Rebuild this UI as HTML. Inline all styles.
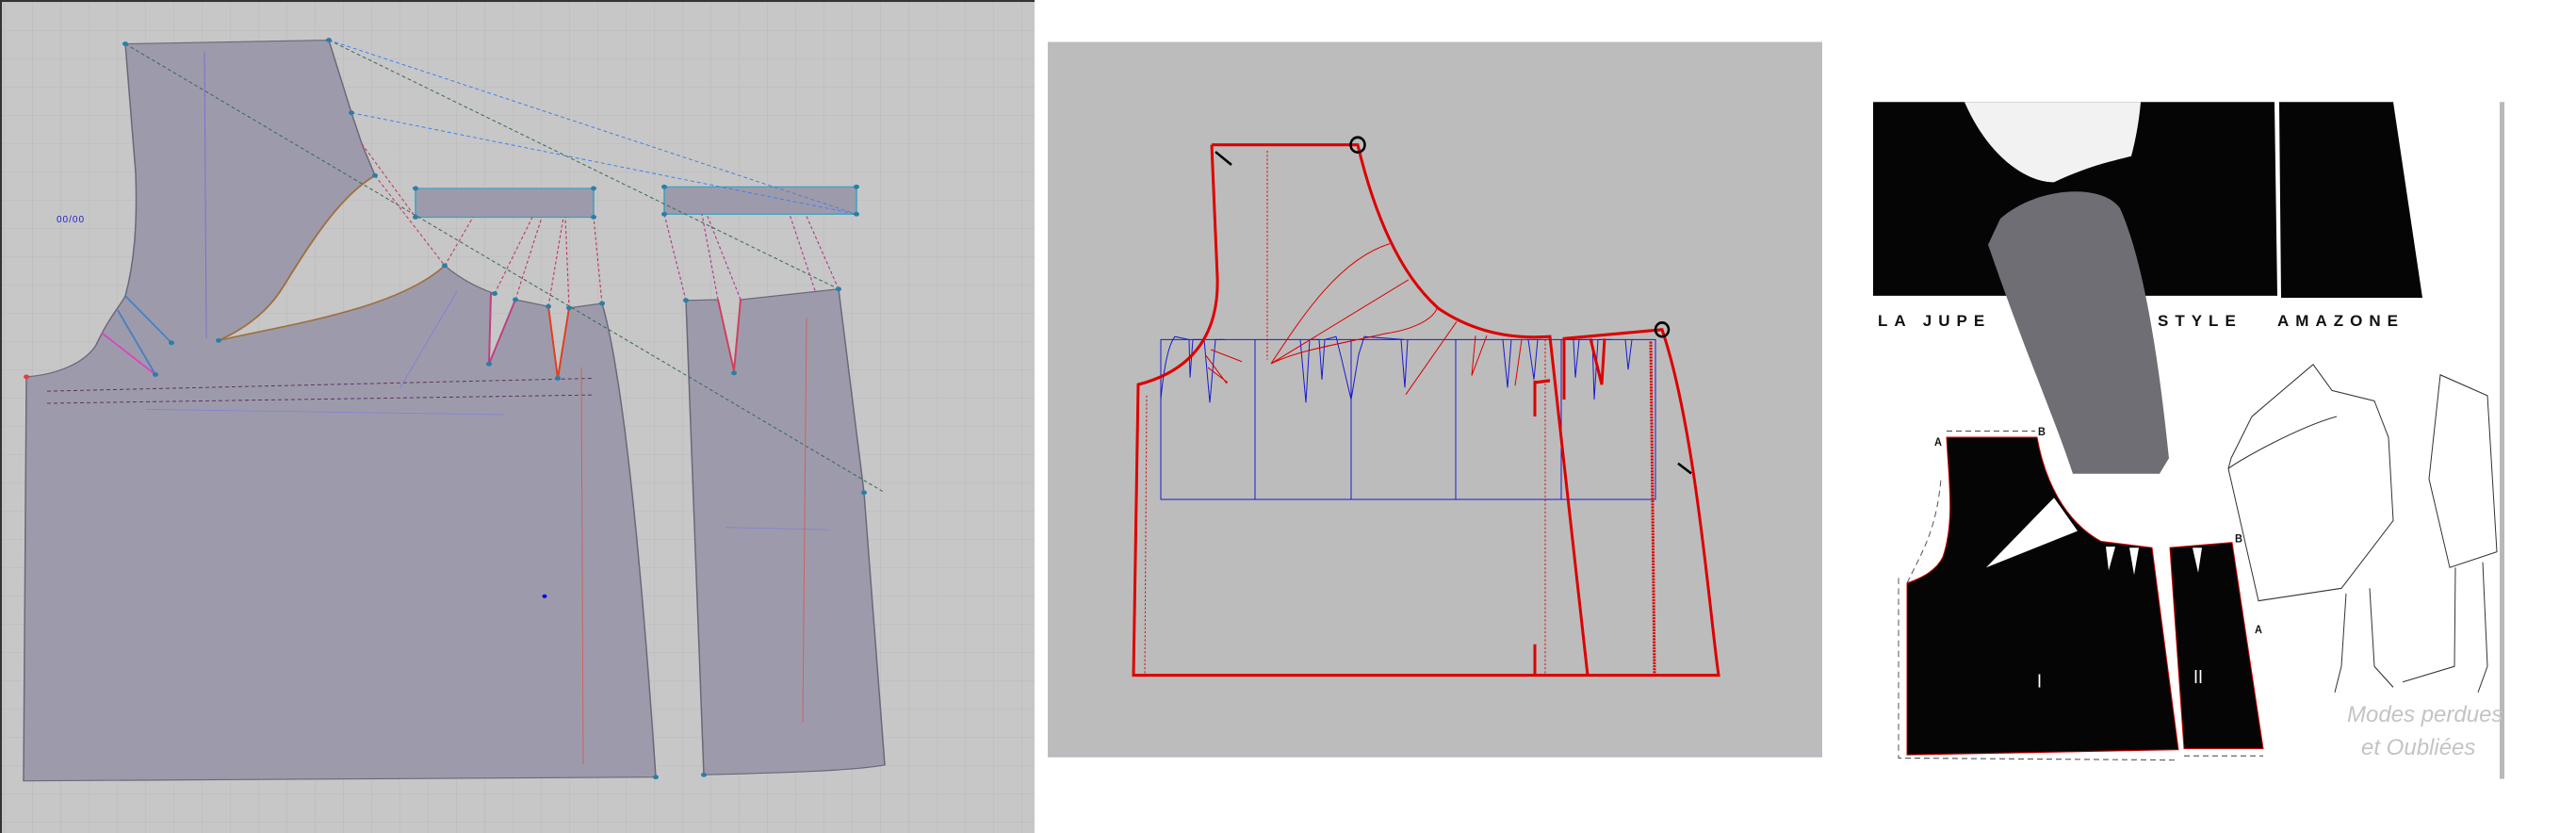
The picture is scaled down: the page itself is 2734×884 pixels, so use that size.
<!DOCTYPE html>
<html><head><meta charset="utf-8"><style>
html,body{margin:0;padding:0;background:#fff;width:2734px;height:884px;overflow:hidden}
svg{display:block}
text{font-family:"Liberation Sans",sans-serif}
</style></head><body>
<svg width="2734" height="884" viewBox="0 0 2734 884" xmlns="http://www.w3.org/2000/svg">
<defs>
<pattern id="g" width="30" height="30" patternUnits="userSpaceOnUse" x="5" y="3">
<path d="M30 0V30M0 30H30" stroke="#b9b9bc" stroke-width="1" fill="none"/>
</pattern>
</defs>
<!-- Panel 1 -->
<rect x="0" y="0" width="1098" height="884" fill="#c7c7c7"/>
<rect x="0" y="0" width="1098" height="884" fill="url(#g)"/>
<rect x="0" y="0" width="1098" height="2" fill="#333"/>
<rect x="0" y="0" width="2" height="884" fill="#333"/>
<g transform="scale(1,0.803)">
<g fill="#9d9bab" stroke="#6a6878" stroke-width="1.5">
<path d="M133 58 L349 53 L373 149 L384 190 L398 232 C360 260 330 320 300 380 C280 420 250 440 232 450 C300 430 420 410 472 351 C490 370 510 382 525 388 L521 388 L519 481 L547 396 L582 405 L592 500 L604 407 L639 401 C655 470 675 640 696 1027 L25 1032 L28 498 C60 495 90 480 102 456 C115 420 130 400 133 391 C142 350 146 300 144 229 Z"/>
<path d="M728 397 L762 396 L779 490 L786 396 L890 382 L917 651 L939 1011 C900 1020 800 1022 747 1024 Z"/>
<path d="M441 249 L630 249 L630 287 L441 287 Z" stroke="#3aa0c0"/>
<path d="M705 247 L909 247 L909 283 L705 283 Z" stroke="#3aa0c0"/>
</g>
<g fill="none" stroke-width="1.2" stroke-dasharray="4 3">
<path d="M349 53 L909 283 M373 149 L909 283" stroke="#3f7ff0"/>
<path d="M133 58 L939 651 M349 53 L890 382" stroke="#3a6a50"/>
<path d="M50 517 L628 500 M50 533 L628 522" stroke="#5a3060"/>
<path d="M384 190 L441 287 M398 232 L472 351 L502 287 M525 388 L565 287 M547 396 L575 287 M582 405 L598 287 M604 407 L600 287 M639 401 L630 287" stroke="#c04060"/>
<path d="M728 397 L705 283 M762 396 L745 283 M786 396 L750 283 M865 384 L838 283 M890 382 L855 283" stroke="#b04090"/>
</g>
<g fill="none" stroke-width="1">
<path d="M217 68 L219 447" stroke="#7a70d0"/>
<path d="M155 541 L535 548 M425 512 L485 385 M770 697 L880 700" stroke="#8080d8"/>
<path d="M617 485 L619 1010 M856 420 L852 955" stroke="#d06060"/>
<path d="M133 391 L182 453 M125 410 L165 495" stroke="#4a80c0" stroke-width="2"/>
<path d="M108 440 L165 495" stroke="#e040c0" stroke-width="2"/>
<path d="M521 388 L519 481 L547 396" stroke="#c04080" stroke-width="2"/>
<path d="M582 405 L592 500 L604 407" stroke="#e04020" stroke-width="2"/>
<path d="M762 396 L779 490 L786 396" stroke="#d04060" stroke-width="2"/>
<path d="M398 232 C360 260 330 320 300 380 C280 420 250 440 232 450 C300 430 420 410 472 351" stroke="#a07040" stroke-width="2"/>
</g>
<g fill="#2a7ea8">
<circle cx="133" cy="58" r="3"/><circle cx="349" cy="53" r="3"/><circle cx="373" cy="149" r="3"/><circle cx="398" cy="232" r="3"/><circle cx="232" cy="450" r="3"/><circle cx="472" cy="351" r="3"/><circle cx="525" cy="388" r="3"/><circle cx="547" cy="396" r="3"/><circle cx="582" cy="405" r="3"/><circle cx="604" cy="407" r="3"/><circle cx="639" cy="401" r="3"/><circle cx="519" cy="481" r="3"/><circle cx="592" cy="500" r="3"/><circle cx="728" cy="397" r="3"/><circle cx="890" cy="382" r="3"/><circle cx="917" cy="651" r="3"/><circle cx="779" cy="493" r="3"/><circle cx="696" cy="1027" r="3"/><circle cx="747" cy="1024" r="3"/><circle cx="441" cy="249" r="3"/><circle cx="630" cy="249" r="3"/><circle cx="441" cy="287" r="3"/><circle cx="630" cy="287" r="3"/><circle cx="705" cy="247" r="3"/><circle cx="909" cy="247" r="3"/><circle cx="705" cy="283" r="3"/><circle cx="909" cy="283" r="3"/><circle cx="182" cy="453" r="3"/><circle cx="165" cy="495" r="3"/>
<circle cx="578" cy="788" r="2.5" fill="#0000ee"/><circle cx="28" cy="498" r="3" fill="#e04040"/>
</g>
</g>
<text x="60" y="236" font-size="10" fill="#2020d0" letter-spacing="1">00/00</text>

<!-- Panel 2 -->
<g transform="scale(1,1.06)">
<rect x="1112" y="42" width="822" height="715" fill="#bcbcbc"/>
<rect x="1112" y="757" width="822" height="1" fill="#a8a8c0"/>
<g fill="none" stroke="#1a1ad0" stroke-width="1">
<path d="M1232 340 L1757 340 L1757 500 L1232 500 Z M1332 340 L1332 500 M1434 340 L1434 500 M1545 340 L1545 500 M1657 340 L1657 500"/>
<path d="M1232 400 C1235 370 1240 345 1247 337 L1262 340 L1263 378 L1266 340 L1278 340 L1284 403 L1290 340 L1300 340 M1380 340 L1386 403 L1390 340 L1400 340 L1403 380 L1406 340 L1418 337 L1424 360 L1434 400 L1442 355 L1448 337 L1490 340 M1487 340 L1491 388 L1494 340 M1595 340 L1600 388 L1604 340 M1622 340 L1628 380 L1632 340 M1662 340 L1670 340 L1672 378 L1676 340 L1690 340 L1692 400 L1696 340 L1710 340 M1725 340 L1728 370 L1732 340"/>
</g>
<g fill="none" stroke="#d00" stroke-width="1">
<path d="M1345 151 L1345 360 M1640 340 L1640 676 M1217 396 L1215 676" stroke-dasharray="2 2"/>
<path d="M1349 364 C1380 320 1420 260 1475 244 M1349 364 C1380 350 1420 345 1470 334 C1500 330 1520 320 1525 309 M1492 395 L1546 322 M1349 364 L1495 280 M1285 350 L1318 362 M1280 356 L1302 384 M1282 368 L1303 383 M1562 376 L1578 336 M1608 386 L1615 340 M1562 376 L1566 336"/>
<path d="M1752 342 L1756 676" stroke-dasharray="2 1" stroke-width="3"/>
</g>
<g fill="none" stroke="#d00" stroke-width="3">
<path d="M1286 145 L1441 145 C1455 200 1480 270 1527 309 C1560 330 1600 340 1645 337 L1685 676 M1286 145 L1292 277 C1294 330 1270 370 1208 385 L1203 676 L1824 676 C1815 619 1800 430 1764 330 L1660 339 L1660 400"/>
<path d="M1688 339 L1700 385 L1703 339 M1629 381 L1629 417 M1629 383 L1645 381 M1629 645 L1629 676"/>
</g>
<g fill="none" stroke="#000" stroke-width="2.5">
<circle cx="1441" cy="145" r="7.5"/><circle cx="1764" cy="330" r="7"/>
<path d="M1290 152 L1307 165 M1781 464 L1795 474"/>
</g>
</g>

<!-- Panel 3 -->
<g transform="scale(1,1.105)">
<rect x="1988" y="98" width="667" height="650" fill="#fff"/>
<rect x="2653" y="98" width="5" height="650" fill="#b8b8b8"/>
<path d="M1988 98 L2414 98 L2417 284 L1988 284 Z" fill="#050505"/>
<path d="M2419 98 L2540 98 L2571 286 L2421 286 Z" fill="#050505"/>
<path d="M2085 98 L2272 98 C2270 120 2265 140 2262 150 C2240 155 2215 160 2180 175 C2150 175 2110 150 2085 98 Z" fill="#f2f2f2"/>
<path d="M2123 210 C2160 180 2230 175 2250 200 C2280 260 2295 380 2302 440 L2292 455 L2200 455 C2180 400 2150 340 2110 235 Z" fill="#6e6e74"/>
<path d="M2066 420 L2162 420 C2170 460 2190 500 2230 520 L2284 526 L2312 720 L2024 725 L2024 560 C2040 555 2055 548 2062 535 C2075 500 2068 460 2066 420 Z" fill="#050505" stroke="#c00" stroke-width="1"/>
<path d="M2108 545 L2180 478 L2205 510 Z" fill="#fff"/>
<path d="M2303 526 L2369 521 L2402 719 L2318 719 Z" fill="#050505" stroke="#c00" stroke-width="1"/>
<g fill="#fff"><path d="M2235 525 L2245 525 L2238 548Z M2260 526 L2270 526 L2265 552Z M2327 526 L2337 526 L2333 550Z"/></g>
<g fill="none" stroke="#555" stroke-width="1" stroke-dasharray="6 4">
<path d="M2066 414 L2160 414 M2015 555 L2015 728 L2312 730 M2318 726 L2402 726 M2024 560 C2040 530 2055 510 2060 460"/>
</g>
<text x="2162" y="660" font-family="Liberation Serif,serif" font-size="18" fill="#fff">I</text>
<text x="2328" y="656" font-family="Liberation Serif,serif" font-size="18" fill="#fff">II</text>
<text x="2053" y="428" font-family="Liberation Serif,serif" font-size="11" fill="#111" font-weight="bold">A</text>
<text x="2163" y="418" font-family="Liberation Serif,serif" font-size="11" fill="#111" font-weight="bold">B</text>
<text x="2372" y="521" font-family="Liberation Serif,serif" font-size="11" fill="#111" font-weight="bold">B</text>
<text x="2393" y="608" font-family="Liberation Serif,serif" font-size="11" fill="#111" font-weight="bold">A</text>
<g fill="none" stroke="#333" stroke-width="1">
<path d="M2368 440 L2390 400 L2455 350 L2475 375 L2520 385 L2535 420 L2540 500 L2485 565 L2397 577 L2365 450 Z M2365 450 C2380 440 2440 410 2480 400"/>
<path d="M2490 570 L2485 640 L2478 665 M2515 565 L2520 640 L2540 660 M2590 360 L2640 380 L2650 530 L2600 545 L2578 460 Z M2606 545 L2605 640 L2550 655 M2635 540 L2640 640 L2630 665"/>
</g>
</g>
<g font-family="Liberation Sans,sans-serif" font-weight="bold" font-size="17" fill="#111" letter-spacing="7">
<text x="1993" y="346">LA JUPE</text><text x="2290" y="346">STYLE</text><text x="2417" y="346">AMAZONE</text>
</g>
<text x="2491" y="766" font-family="Liberation Serif,serif" font-style="italic" font-size="24" fill="#c4c4c8">Modes perdues</text>
<text x="2506" y="801" font-family="Liberation Serif,serif" font-style="italic" font-size="24" fill="#c4c4c8">et Oubliées</text>
</svg>
</body></html>
